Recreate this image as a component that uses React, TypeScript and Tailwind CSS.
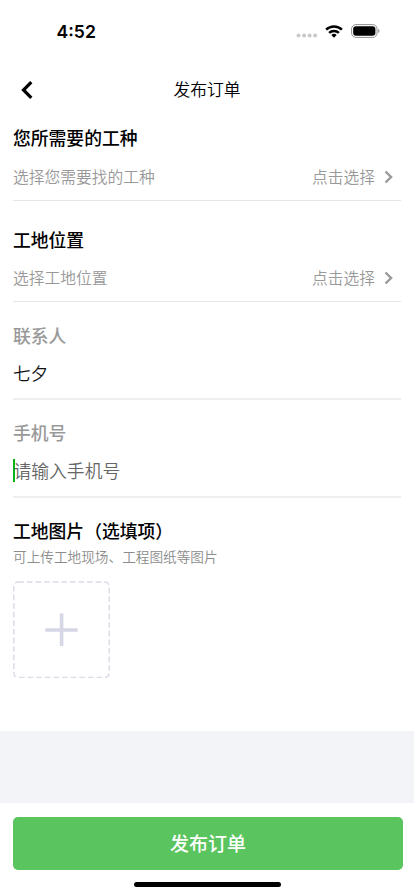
import type { ReactNode } from 'react';

function Chevron() {
  return (
    <svg className="ml-[9px] mr-[8px] h-[14px] w-[9px]" viewBox="0 0 9 14" fill="none" stroke="#999999" strokeWidth="2.4">
      <path d="M1.5 1.5 7.1 7l-5.6 5.5" />
    </svg>
  );
}

function Heading({ children, muted = false }: { children: ReactNode; muted?: boolean }) {
  return (
    <h2 className={`flex h-7 items-center pb-[2px] text-[17.8px] font-medium whitespace-nowrap ${muted ? 'text-[#999999]' : 'text-black'}`}>
      {children}
    </h2>
  );
}

function PickerRow({ label, className }: { label: string; className: string }) {
  return (
    <div className={`flex items-center justify-between border-b border-[#e6e6e6] text-[15.75px] font-[350] text-[#999999] ${className}`}>
      <span>{label}</span>
      <span className="flex items-center">
        点击选择
        <Chevron />
      </span>
    </div>
  );
}

function StatusBar() {
  return (
    <div className="flex h-[62px] items-center justify-between pl-[56.5px] pr-[34.5px]">
      <span className="pt-px font-['Inter'] text-[17.6px] leading-none font-semibold text-black">4:52</span>
      <div className="flex items-center">
        <svg className="mt-[9px] mr-[7px] h-[5px] w-[22px]" viewBox="0 0 22 5" fill="#c8c8c8">
          <circle cx="2.5" cy="2.5" r="2" />
          <circle cx="8.1" cy="2.5" r="2" />
          <circle cx="13.6" cy="2.5" r="2" />
          <circle cx="19.1" cy="2.5" r="2" />
        </svg>
        <svg className="mr-[8px] h-[13px] w-[18px]" viewBox="0 0 18 13" fill="none" stroke="#000" strokeWidth="2.5">
          <path d="M1.1 4.6a11.3 11.3 0 0 1 15.8 0" />
          <path d="M4.1 7.9a7 7 0 0 1 9.8 0" />
          <path d="M9 12.8 6.3 10.1a3.9 3.9 0 0 1 5.4 0Z" fill="#000" stroke="none" />
        </svg>
        <svg className="h-[14px] w-[29px]" viewBox="0 0 29 14">
          <rect x="0.6" y="0.6" width="25.4" height="12.8" rx="4.2" fill="none" stroke="#8f8f8f" strokeWidth="1" />
          <rect x="2.2" y="2.2" width="22.2" height="9.6" rx="2.8" fill="#000" />
          <path d="M27.2 4.8c1.7.7 1.7 3.7 0 4.4Z" fill="#8f8f8f" />
        </svg>
      </div>
    </div>
  );
}

export default function App() {
  return (
    <div className="flex h-[896px] w-[414px] flex-col overflow-hidden bg-white font-['Noto_Sans_CJK_SC','Noto_Sans',sans-serif]">
      <StatusBar />
      <header className="grid h-[54px] grid-cols-[60px_1fr_60px] items-center">
        <svg className="mt-[2px] ml-[21px] h-[18px] w-[12px]" viewBox="0 0 12 18" fill="none" stroke="#000" strokeWidth="3.2">
          <path d="M10.3 1.2 2.5 9l7.8 7.8" />
        </svg>
        <h1 className="pt-[2px] text-center text-[16.8px] font-[350] text-black">发布订单</h1>
      </header>

      <main className="flex h-[614.5px] flex-col pt-[8px] pr-[13px] pl-[13px]">
        <Heading>您所需要的工种</Heading>
        <PickerRow label="选择您需要找的工种" className="h-[49px] pt-px" />

        <div className="mt-[25px]">
          <Heading>工地位置</Heading>
          <PickerRow label="选择工地位置" className="h-[48px]" />
        </div>

        <div className="mt-[20px]">
          <Heading muted>联系人</Heading>
          <div className="flex h-[50px] items-center border-b-2 border-[#efefef] pb-[2px] text-[17.6px] font-[350] text-[#111111]">七夕</div>
        </div>

        <div className="mt-[19px]">
          <Heading muted>手机号</Heading>
          <div className="flex h-[51px] items-center border-b-2 border-[#efefef] pb-[3px] text-[17.8px] font-[350] text-[#666666]">
            <span className="h-[23px] w-[2px] bg-[#09b314]" />
            <span className="-ml-[1.5px]">请输入手机号</span>
          </div>
        </div>

        <div className="mt-[19px]">
          <Heading>工地图片（选填项）</Heading>
          <p className="flex h-[23px] items-center text-[13.65px] font-[350] whitespace-nowrap text-[#8c8c8c]">可上传工地现场、工程图纸等图片</p>
          <button className="mt-[13px] flex h-[97px] w-[97px] items-center justify-center">
            <svg className="h-[97px] w-[97px]" viewBox="0 0 97 97" fill="none" stroke="#dcdce9">
              <rect x="0.8" y="1" width="95.4" height="95.4" rx="4.5" strokeWidth="1.5" strokeDasharray="5.6 3" />
              <path d="M32.2 49h32.4M48.6 32.6v32.4" stroke="#d6d7e6" strokeWidth="3.6" />
            </svg>
          </button>
        </div>
      </main>

      <div className="h-[72.5px] bg-[#f2f4f8]" />

      <footer className="flex flex-1 flex-col pt-[13.5px] pr-[11px] pl-[13px]">
        <button className="h-[53px] w-[390px] rounded-[5px] bg-[#5ac45e] pt-px text-[19px] font-medium text-white">发布订单</button>
        <div className="mt-[12.5px] ml-[121px] h-[5px] w-[147px] rounded-full bg-black" />
      </footer>
    </div>
  );
}
